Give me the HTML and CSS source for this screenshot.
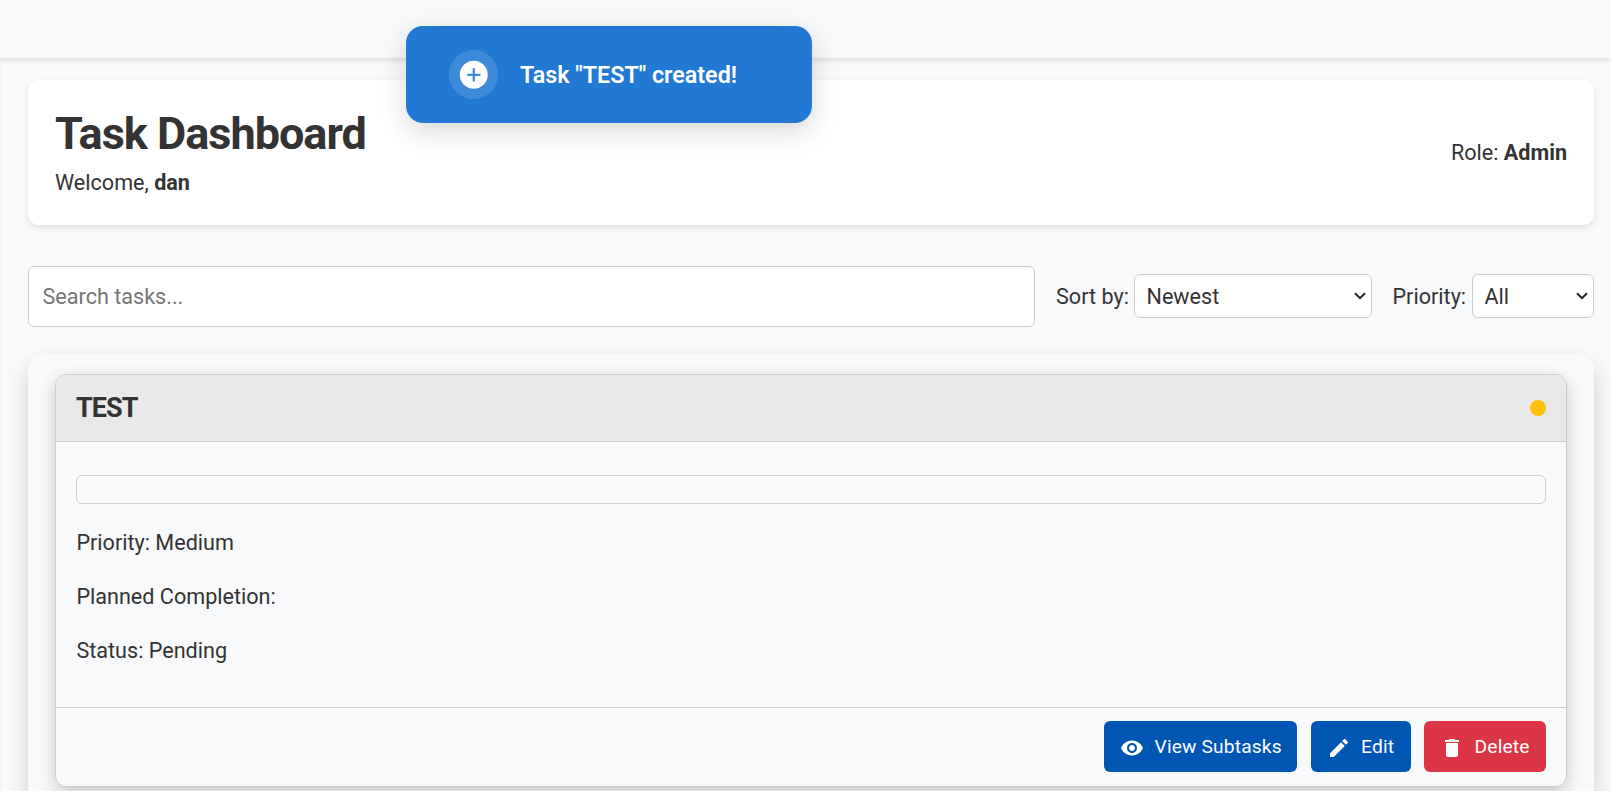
FILE: index.html
```
<!DOCTYPE html>
<html lang="en">
<head>
<meta charset="utf-8">
<title>Task Dashboard</title>
<link rel="stylesheet" href="styles.css">
</head>
<body>
<div class="topbar"></div>
<main class="content">
  <header class="page-header">
    <div>
      <h1 class="title">Task Dashboard</h1>
      <p class="welcome">Welcome, <b>dan</b></p>
    </div>
    <p class="role">Role: <b>Admin</b></p>
  </header>
  <div class="filters">
    <input class="search" type="text" placeholder="Search tasks...">
    <label class="filter-label sort-label" for="sort">Sort by:</label>
    <select class="select select-sort" id="sort"><option>Newest</option><option>Oldest</option></select>
    <label class="filter-label priority-label" for="priority">Priority:</label>
    <select class="select select-priority" id="priority"><option>All</option><option>Medium</option></select>
  </div>
  <section class="task-list">
    <article class="task">
      <div class="task-head">
        <h2 class="task-name">TEST</h2>
        <span class="dot"></span>
      </div>
      <div class="task-body">
        <div class="description"></div>
        <p class="field">Priority: Medium</p>
        <p class="field">Planned Completion:</p>
        <p class="field">Status: Pending</p>
      </div>
      <div class="task-actions">
        <button class="btn btn-view"><svg class="icon" viewBox="0 0 24 24"><path d="M12 4.500C7 4.500 2.730 7.610 1 12c1.730 4.390 6 7.500 11 7.500s9.270-3.110 11-7.500c-1.730-4.390-6-7.500-11-7.500zM12 17c-2.760 0-5-2.240-5-5s2.240-5 5-5 5 2.240 5 5-2.240 5-5 5zm0-8c-1.660 0-3 1.340-3 3s1.340 3 3 3 3-1.340 3-3-1.340-3-3-3z"/></svg><span>View Subtasks</span></button>
        <button class="btn btn-edit"><svg class="icon" viewBox="0 0 24 24"><path d="M3 17.250V21h3.750L17.810 9.940l-3.750-3.750L3 17.250zM20.710 7.040c.39-.39.39-1.020 0-1.410l-2.340-2.340c-.39-.39-1.020-.39-1.410 0l-1.830 1.830 3.750 3.750 1.830-1.830z"/></svg><span>Edit</span></button>
        <button class="btn btn-delete"><svg class="icon" viewBox="0 0 24 24"><path d="M6 19c0 1.100.9 2 2 2h8c1.100 0 2-.9 2-2V7H6v12zM19 4h-3.500l-1-1h-5l-1 1H5v2h14V4z"/></svg><span>Delete</span></button>
      </div>
    </article>
  </section>
</main>
<div class="toast" role="status">
  <span class="toast-badge"><svg class="toast-icon" viewBox="0 0 24 24"><path d="M12 2C6.480 2 2 6.480 2 12s4.480 10 10 10 10-4.480 10-10S17.520 2 12 2zm4.700 10.800h-3.900v3.900h-1.600v-3.900H7.300v-1.600h3.900V7.300h1.600v3.900h3.900v1.600z"/></svg></span>
  <span class="toast-text">Task "TEST" created!</span>
</div>
</body>
</html>
```

FILE: styles.css
```
* { box-sizing: border-box; }
html, body { height: 100%; }
body {
  margin: 0;
  display: flex;
  flex-direction: column;
  overflow: hidden;
  background: #f8f9fb;
  color: #333;
  font-family: Roboto, sans-serif;
  font-size: 21.6px;
}
h1, h2, p { margin: 0; }
.topbar {
  flex: none;
  height: 58px;
  position: relative;
  z-index: 1;
  background: #f8f9fb;
  box-shadow: 0 3px 5px rgba(0, 0, 0, .1);
}
.content {
  flex: 1;
  min-height: 0;
  display: flex;
  flex-direction: column;
  padding: 22px 17px 0 27px;
  border-left: 1px solid #f1f2f4;
}
.page-header {
  flex: none;
  display: flex;
  justify-content: space-between;
  align-items: center;
  height: 145px;
  padding: 2px 27px 0;
  background: #fff;
  border-radius: 11px;
  box-shadow: 0 3px 7px rgba(0, 0, 0, .1);
}
.title { font-size: 45px; line-height: 54px; font-weight: 700; letter-spacing: -1px; }
.welcome { margin-top: 5px; line-height: 34px; }
.role { padding-bottom: 2px; line-height: 34px; }
.filters { flex: none; display: flex; align-items: center; height: 61px; margin-top: 41px; }
.search {
  flex: none;
  width: 1007px;
  height: 61px;
  padding: 0 13.5px;
  border: 1px solid #ccc;
  border-radius: 6px;
  background: #fff;
  font: inherit;
}
.search::placeholder { color: #757575; }
.filter-label { flex: none; }
.sort-label { width: 78px; margin-left: 21px; }
.priority-label { width: 79.5px; margin-left: 20.5px; }
.select {
  flex: none;
  appearance: none;
  height: 44px;
  margin-bottom: 1px;
  padding: 0 11.5px;
  border: 1px solid #ccc;
  border-radius: 6px;
  background: #fff url("data:image/svg+xml,%3Csvg xmlns='http://www.w3.org/2000/svg' width='12' height='8' viewBox='0 0 12 8'%3E%3Cpath d='M1 1.200 6 6.200 11 1.200' fill='none' stroke='%23222' stroke-width='2'/%3E%3C/svg%3E") no-repeat right 5px center;
  color: #333;
  font: inherit;
}
.select-sort { width: 238px; }
.select-priority { width: 122px; }
.task-list {
  flex: 1;
  min-height: 0;
  margin-top: 27px;
  padding: 20px 27px 0;
  border-radius: 16px 16px 0 0;
  box-shadow: 0 11px 22px rgba(0, 0, 0, .18);
}
.task {
  border: 1px solid #ccc;
  border-radius: 11px;
  overflow: hidden;
  box-shadow: 0 5px 16px rgba(0, 0, 0, .2);
}
.task-head {
  display: flex;
  justify-content: space-between;
  align-items: center;
  height: 67px;
  padding: 0 20px;
  background: #e9e9e9;
  border-bottom: 1px solid #ccc;
}
.task-name { font-size: 27px; line-height: 34px; letter-spacing: -.9px; }
.dot { width: 16px; height: 16px; border-radius: 50%; background: #ffc107; }
.task-body { height: 265px; padding: 33px 20px 0; }
.description { height: 29px; margin-bottom: 22px; border: 1px solid #ccc; border-radius: 6px; }
.field { padding-left: .4px; line-height: 34px; margin-bottom: 20px; }
.task-actions {
  display: flex;
  justify-content: flex-end;
  gap: 13.5px;
  height: 79px;
  padding: 13px 20px 0;
  border-top: 1px solid #ccc;
}
.btn {
  display: flex;
  align-items: center;
  height: 51px;
  padding: 0 16px;
  border: 0;
  border-radius: 6px;
  background: #0056b3;
  color: #fff;
  font: 400 19.2px Roboto, sans-serif;
  letter-spacing: .15px;
  white-space: nowrap;
}
.btn-view { width: 193px; }
.btn-edit { width: 100px; }
.btn-delete { width: 122px; background: #dc3545; }
.icon { flex: none; width: 24px; height: 24px; margin: 3px 10.6px 0 0; fill: currentColor; }
.toast {
  position: absolute;
  z-index: 2;
  left: 406px;
  top: 26px;
  display: flex;
  align-items: center;
  width: 405.5px;
  height: 97px;
  padding-left: 43.4px;
  border-radius: 17px;
  background: rgba(25, 116, 210, .96);
  color: #fff;
  box-shadow: 0 8px 28px rgba(0, 0, 0, .16);
}
.toast-badge {
  display: flex;
  align-items: center;
  justify-content: center;
  width: 49px;
  height: 49px;
  margin-right: 21.6px;
  border-radius: 50%;
  background: rgba(255, 255, 255, .13);
}
.toast-icon { width: 33.6px; height: 33.6px; fill: #fff; }
.toast-text { font-size: 23.3px; font-weight: 600; }
```
